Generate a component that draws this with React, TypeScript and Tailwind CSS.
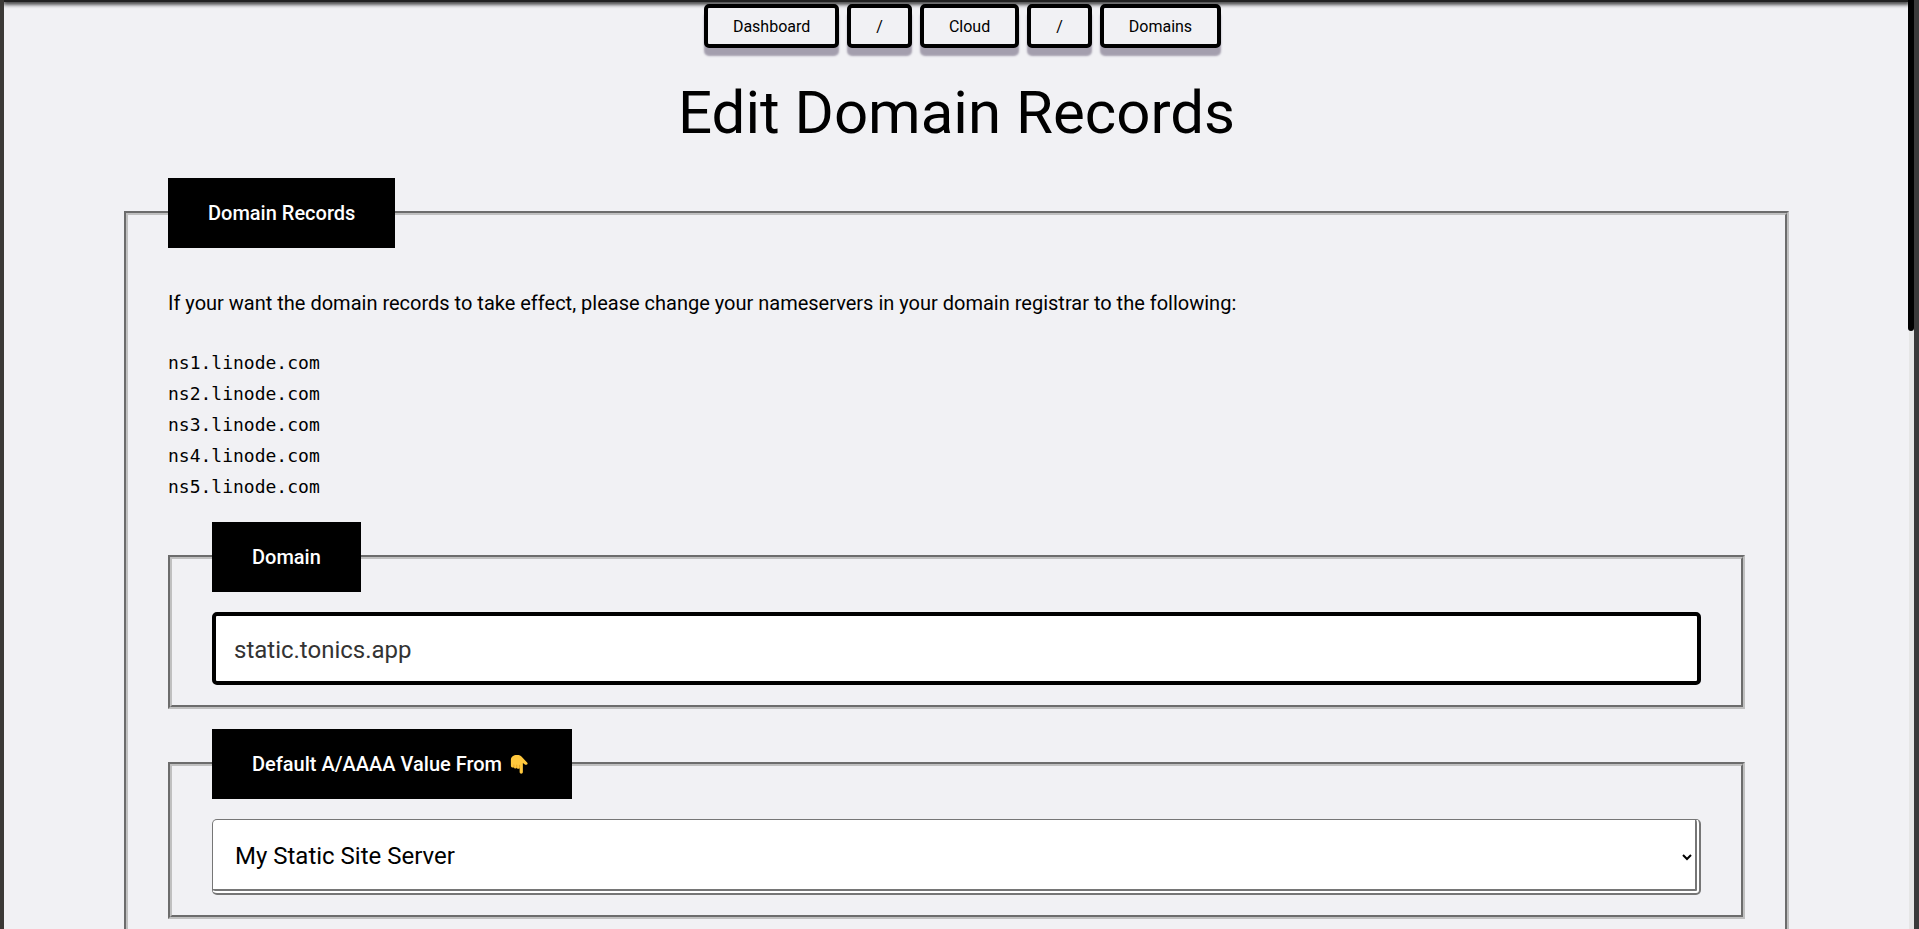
import { useState } from 'react'
import type { ReactNode } from 'react'

// ─── Data ─────────────────────────────────────────────────────────────────────

const CRUMBS = ['Dashboard', '/', 'Cloud', '/', 'Domains']

const NAMESERVERS = [
  'ns1.linode.com',
  'ns2.linode.com',
  'ns3.linode.com',
  'ns4.linode.com',
  'ns5.linode.com',
]

// ─── Pieces ───────────────────────────────────────────────────────────────────

function PointDown() {
  return (
    <svg viewBox="0 0 20 22" className="mr-1 ml-2 h-[22px] w-[18px]" aria-label="pointing down" role="img">
      <path
        d="M1 10V6.5C1 3 4 1 7.5 1c3 0 4.700.7 6 2.500l5.500 5.700c1 1.100.6 2.500-.6 2.700-1 .2-1.800-.3-2.600-1L14.300 10v10c0 1.100-.8 1.800-1.800 1.800s-1.800-.7-1.800-1.800v-4.600c-.3.700-.9 1-1.600 1-.8 0-1.400-.5-1.600-1.200-.3.500-.8.800-1.500.800-.9 0-1.500-.6-1.700-1.400-.3.300-.7.400-1.200.400C1.800 15 1 14.200 1 13z"
        fill="#ffc83d"
      />
      <path
        d="M4.300 14.600v-2.500M7.500 15.200v-3M10.700 15.400v-3"
        stroke="#d68a10"
        strokeWidth="0.6"
        strokeLinecap="round"
      />
    </svg>
  )
}

interface GroupProps {
  title: ReactNode
  className?: string
  children: ReactNode
}

function Group({ title, className = 'pb-5', children }: GroupProps) {
  return (
    <fieldset className={`min-w-0 border-4 border-[#c0c0c0] px-10 [border-style:groove] ${className}`}>
      <legend className="bg-black px-10 py-5 text-xl leading-[30px] font-medium text-white">
        <span className="flex items-center">{title}</span>
      </legend>
      {children}
    </fieldset>
  )
}

// ─── App ──────────────────────────────────────────────────────────────────────

export default function App() {
  const [domain, setDomain] = useState('static.tonics.app')

  return (
    <div className="flex h-screen bg-[#f1f1f4] font-[Roboto,sans-serif] text-black">
      <div className="w-1 flex-none bg-[#3b3936]" />

      <main className="min-w-0 flex-1 overflow-hidden">
        <div className="h-[2px] bg-[#222] shadow-[0_1px_4px_1px_#000]" />

        <nav aria-label="Breadcrumb" className="relative mt-[2px] ml-3 flex justify-center gap-2">
          {CRUMBS.map((label, i) => (
            <a
              key={i}
              href="#"
              className="rounded-[5px] border-4 border-black bg-[#f1f1f4] px-[25px] pt-[7px] pb-[5px] text-base shadow-[0_8px_2px_#a49fae]"
            >
              {label}
            </a>
          ))}
        </nav>

        <h1 className="mt-5 text-center text-6xl leading-[90px]">Edit Domain Records</h1>

        <form className="mt-5 px-[120px]">
          <Group title="Domain Records" className="pb-20">
            <p className="mt-10 text-xl leading-[30px]">
              If your want the domain records to take effect, please change your nameservers in your
              domain registrar to the following:
            </p>
            <ul className="mt-[29px] mb-5 font-['DejaVu_Sans_Mono',monospace] text-lg leading-[31px]">
              {NAMESERVERS.map((ns) => (
                <li key={ns}>{ns}</li>
              ))}
            </ul>

            <div className="flex flex-col gap-5">
              <Group title={<label htmlFor="domain">Domain</label>}>
                <input
                  id="domain"
                  type="text"
                  value={domain}
                  onChange={(e) => setDomain(e.target.value)}
                  className="mt-5 block h-[73px] w-full rounded-[5px] border-4 border-black bg-white px-[18px] pt-0.5 text-2xl text-[#333]"
                />
              </Group>

              <Group
                title={
                  <>
                    <label htmlFor="source">Default A/AAAA Value From</label>
                    <PointDown />
                  </>
                }
              >
                <select
                  id="source"
                  className="mt-5 block h-[76px] w-full rounded-[5px] border border-r-6 border-b-6 border-double border-[#767676] bg-white px-[18px] pt-0.5 text-2xl"
                >
                  <option>My Static Site Server</option>
                </select>
              </Group>
            </div>
          </Group>
        </form>
      </main>

      {/* Scroll track, the thumb is a pixel wider than the track */}
      <div className="relative w-[5px] flex-none bg-[#e6e6e6]">
        <div className="-ml-px h-[331px] rounded-b-[3px] bg-black" />
      </div>
      <div className="w-[5px] flex-none bg-[#3a3a3a]" />
    </div>
  )
}
